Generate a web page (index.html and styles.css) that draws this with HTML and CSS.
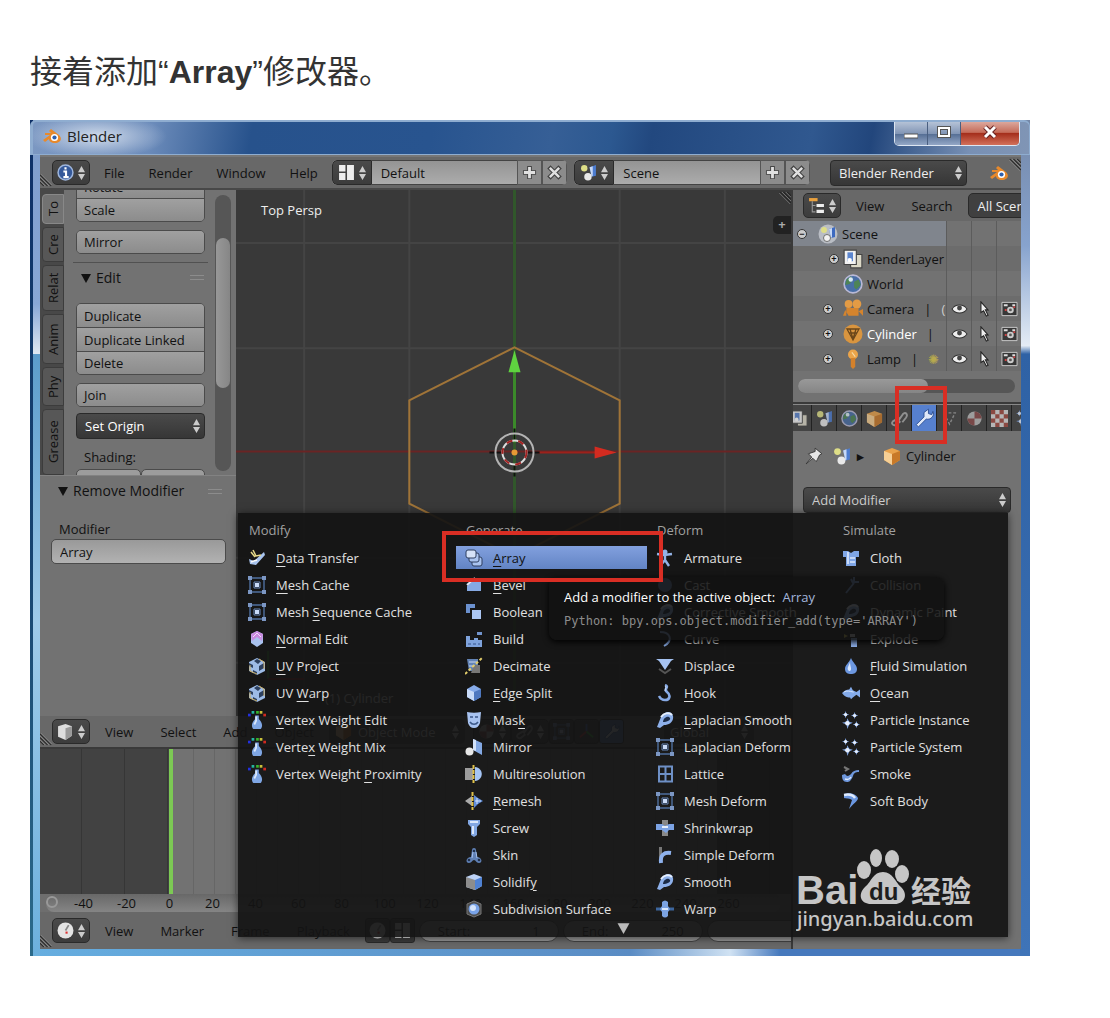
FILE: index.html
```html
<!DOCTYPE html>
<html lang="zh-CN">
<head>
<meta charset="utf-8">
<meta name="viewport" content="width=device-width, initial-scale=1">
<title>Array 修改器</title>
<link rel="stylesheet" href="styles.css">
</head>
<body>
<svg class="sprite" aria-hidden="true">
  <symbol id="updown" viewBox="0 0 8 16"><path d="M4 0l4 7H0zM4 16l4-7H0z" fill="currentColor"/></symbol>
  <symbol id="tri" viewBox="0 0 10 10"><path d="M0 1h10L5 10z" fill="currentColor"/></symbol>
  <symbol id="plus" viewBox="0 0 16 16"><path d="M8 1v14M1 8h14" stroke="#444" stroke-width="5"/><path d="M8 2v12M2 8h12" stroke="#e0e0e0" stroke-width="3"/></symbol>
  <symbol id="cross" viewBox="0 0 16 16"><path d="M2 2l12 12M14 2L2 14" stroke="#444" stroke-width="5"/><path d="M3 3l10 10M13 3L3 13" stroke="#e0e0e0" stroke-width="2.6"/></symbol>
  <symbol id="grip" viewBox="0 0 16 16"><path d="M0 1l15 15M0 6l10 10M0 11l5 5" stroke="#222" stroke-width="1.4"/><path d="M1 0l15 15M0 4l12 12M0 9l7 7" stroke="#999" stroke-width=".8"/></symbol>
  <symbol id="blender" viewBox="0 0 20 16"><path d="M1 12l7-5H3V5h6L7 3l2-2 8 6c4 4 1 8-4 8-4 0-6-2-6-4l-4 3z" fill="#e8892b"/><circle cx="12.500" cy="9.500" r="3.600" fill="#fff"/><circle cx="12.500" cy="9.500" r="2.100" fill="#2d5fae"/></symbol>
  <symbol id="info" viewBox="0 0 16 16"><circle cx="8" cy="8" r="7" fill="#35599a" stroke="#9fb6dc" stroke-width="1.400"/><path d="M8 3v2.200M6 7h2.500v5M6 12.300h5" stroke="#fff" stroke-width="2" fill="none"/></symbol>
  <symbol id="layout" viewBox="0 0 16 16"><path d="M1 1h6v6H1zM1 8.500h6V15H1zM8.500 1H15v14H8.500z" fill="#eee"/></symbol>
  <symbol id="scene" viewBox="0 0 16 16"><circle cx="4" cy="4" r="3" fill="#dede87"/><path d="M9 3l6-2v10l-4 1z" fill="#4c7cd0"/><path d="M9 3l3-1v9l-1 1z" fill="#c7d9f7"/><circle cx="7.500" cy="12" r="3.500" fill="#e9e9e9"/></symbol>
  <symbol id="scene-on" viewBox="0 0 20 20"><circle cx="10" cy="10" r="9.500" fill="#b9bdc4"/><circle cx="6" cy="6" r="3" fill="#dede87"/><path d="M11 5l6-2v10l-4 1z" fill="#3d6ac0"/><path d="M11 5l3-1v9l-1 1z" fill="#c7d9f7"/><circle cx="9" cy="14" r="3.500" fill="#f2f2f2" stroke="#555" stroke-width=".8"/></symbol>
  <symbol id="outliner" viewBox="0 0 16 16"><path d="M1 1h8v3H1z" fill="#e9a13e"/><path d="M4 4v10h3M4 8h3" stroke="#999" fill="none"/><path d="M8 6.500h7v3H8zM8 12h7v3H8z" fill="#eee"/></symbol>
  <symbol id="cube3d" viewBox="0 0 16 16"><path d="M1 3l7-2 6 2v9l-6 4-7-3z" fill="#ddd"/><path d="M8 5l6-2v9l-6 4z" fill="#999"/></symbol>
  <symbol id="clock" viewBox="0 0 16 16"><circle cx="8" cy="8" r="7.500" fill="#e4e4e4"/><path d="M8 8l3-5" stroke="#888" stroke-width="1.600"/><path d="M8 9h2v2H8z" fill="#d33"/></symbol>
  <symbol id="layers" viewBox="0 0 18 18"><path d="M6 5h11v12H7z" fill="#dcd9c8" stroke="#444"/><path d="M1 1h11v13H1z" fill="#f2f2f2" stroke="#444"/><path d="M4 3h5v8H4z" fill="#5c86cf"/><circle cx="6" cy="10" r="2" fill="#fff"/></symbol>
  <symbol id="world" viewBox="0 0 18 18"><circle cx="9" cy="9" r="8" fill="#486ea6" stroke="#b9b9d6" stroke-width="1.500"/><path d="M3 5l4-3 2 3-3 4-4 1zM10 7l4-2 2 5-4 4-2-2z" fill="#4e8456"/><circle cx="7" cy="5" r="2" fill="#d8e8f5"/></symbol>
  <symbol id="camera" viewBox="0 0 18 18"><circle cx="5" cy="4.500" r="3.500" fill="#e39b45"/><circle cx="12.500" cy="4.500" r="4" fill="#e39b45"/><path d="M3 8h11v7H3zM14 11l4-2v6zM2 10l-2 5h5z" fill="#d5842d"/></symbol>
  <symbol id="mesh" viewBox="0 0 20 20"><circle cx="10" cy="10" r="9.500" fill="#d9953f"/><path d="M4 5h12l-6 11zM7 5l3 10 3-10M6 9h8" stroke="#6a461a" stroke-width="1.300" fill="none"/></symbol>
  <symbol id="lamp" viewBox="0 0 16 18"><circle cx="8" cy="5" r="4.500" fill="#eba44a"/><path d="M6 8h4v8l-2 2-2-2z" fill="#d4812b"/><path d="M7 3l3 4" stroke="#f8dca8"/></symbol>
  <symbol id="eye" viewBox="0 0 16 12"><path d="M1 6c3-5 11-5 14 0-3 5-11 5-14 0z" fill="#eee" stroke="#333"/><circle cx="8" cy="5" r="2.300" fill="#444"/></symbol>
  <symbol id="pointer" viewBox="0 0 12 18"><path d="M2 1l8 9H7l3 6-2 1-3-6-3 2z" fill="#eee" stroke="#222" stroke-width="1.200"/></symbol>
  <symbol id="photo" viewBox="0 0 18 16"><path d="M1 1h16v14H1z" fill="#383838" stroke="#ccc"/><circle cx="10" cy="9" r="3.500" fill="#ccc"/><circle cx="10" cy="9" r="1.500" fill="#555"/><path d="M3 4h4M12 4h3" stroke="#ddd" stroke-width="2"/><path d="M4 8h2v2H4zM13 5h2v2h-2z" fill="#c44"/></symbol>
  <symbol id="objcube" viewBox="0 0 18 18"><path d="M1 4l8-3 8 3v9l-8 5-8-5z" fill="#e9a24b"/><path d="M1 4l8 3v11l-8-5z" fill="#f6cf95"/><path d="M9 7l8-3v9l-8 5z" fill="#c87928"/></symbol>
  <symbol id="link" viewBox="0 0 18 18"><path d="M8 11l5-7c3-2 5 1 3 4l-4 5M9 8l-7 4c-2 2 0 5 3 4l5-4" stroke="#aaa" stroke-width="2" fill="none"/></symbol>
  <symbol id="wrench" viewBox="0 0 18 18"><path d="M2 15L9 8V4l4-3v4l3 1 1-3c2 4-2 8-6 7l-7 7z" fill="#dfe8f8" stroke="#274a8e" stroke-width=".8"/></symbol>
  <symbol id="data" viewBox="0 0 18 18"><path d="M3 3h12L9 15z" stroke="#999" stroke-width="1.500" stroke-dasharray="3 2" fill="none"/></symbol>
  <symbol id="ball" viewBox="0 0 18 18"><circle cx="9" cy="9" r="7.500" fill="#bbb"/><path d="M9 9V1.500A7.500 7.500 0 0 1 16.500 9zM9 9v7.500A7.500 7.500 0 0 1 1.500 9z" fill="#8a4a4a"/></symbol>
  <symbol id="checker" viewBox="0 0 16 16"><path d="M0 0h16v16H0z" fill="#ddd"/><path d="M0 0h4v4H0zM8 0h4v4H8zM4 4h4v4H4zM12 4h4v4h-4zM0 8h4v4H0zM8 8h4v4H8zM4 12h4v4H4zM12 12h4v4h-4z" fill="#a34b42"/></symbol>
  <symbol id="pin" viewBox="0 0 16 16"><path d="M9 1l6 5-2 1-2 4-1 2-3-3-6 5 5-6-3-3 6-2z" fill="#e6e6e6" stroke="#333" stroke-width=".8"/></symbol>
  <symbol id="axes" viewBox="0 0 18 18"><path d="M9 9V1" stroke="#4a6fd0" stroke-width="2"/><path d="M9 9l-7 6" stroke="#c33" stroke-width="2"/><path d="M9 9l7 6" stroke="#3b3" stroke-width="2"/></symbol>

  <symbol id="i-transfer" viewBox="0 0 18 18"><path d="M1 10l5 2 10-9 1 3-9 10-6-1z" fill="#a9c4ee"/><path d="M5 1l3 6 5-1M3 3l4 5" stroke="#e6d98a" stroke-width="1.500" fill="none"/><path d="M3 13l6-2" stroke="#fff" stroke-width="1.500"/></symbol>
  <symbol id="i-cage" viewBox="0 0 18 18"><path d="M2 2h14v14H2z" fill="none" stroke="#4f6f9f" stroke-width="1.400"/><path d="M0 0h4v4H0zM14 0h4v4h-4zM0 14h4v4H0zM14 14h4v4h-4z" fill="#7c97c4"/><path d="M7 7h4v4H7z" fill="#c9dbf8"/><path d="M6 6h6v6H6z" fill="none" stroke="#6686b8"/></symbol>
  <symbol id="i-normal" viewBox="0 0 18 18"><path d="M3 4l6-3 6 3v9l-6 4-6-4z" fill="#a9c2ee"/><path d="M3 4l6-3 6 3-1 7-5-4-5 4z" fill="#c98be0"/><path d="M5 7l4-4 4 4" stroke="#f3d9fa" fill="none"/></symbol>
  <symbol id="i-uv" viewBox="0 0 18 18"><path d="M9 1l8 4v9l-8 4-8-4V5z" fill="#9dbbe6"/><path d="M1 6l4 2v3l-4-2zM9 2l4 2-3 3-4-3zM11 9l5-3v5l-5 3zM5 13l4 2v3l-4-2z" fill="#2c3f5e"/><path d="M9 17l-7-3V8M16 12V5l-5-3" stroke="#c9ad63" fill="none"/></symbol>
  <symbol id="i-weight" viewBox="0 0 20 20"><path d="M0 3h3v3H0z" fill="#2330e0"/><path d="M4 0h3v3H4z" fill="#26b6a0"/><path d="M9 0h3v3H9z" fill="#37b52c"/><path d="M13 0h3v3h-3z" fill="#c9c13a"/><path d="M17 3h3v3h-3z" fill="#d02a20"/><path d="M8 5h4v4c5 5 4 9 2 11H6c-2-2-3-6 2-11z" fill="#7fa6e4"/><path d="M9 6v5l-2 4" stroke="#d9e7fc" stroke-width="2" fill="none"/></symbol>
  <symbol id="i-array" viewBox="0 0 18 18"><g fill="#a9c3ef" stroke="#2e3f60"><rect x="7" y="8" width="10" height="9" rx="2"/><rect x="4" y="4" width="10" height="9" rx="2"/><rect x="1" y="1" width="10" height="8" rx="2" fill="#d5e2f8"/></g></symbol>
  <symbol id="i-bevel" viewBox="0 0 18 18"><path d="M2 10L10 3h6v12H2z" fill="#86a9e3"/><path d="M2 9l8-7" stroke="#dfe9fb" stroke-width="2"/></symbol>
  <symbol id="i-boolean" viewBox="0 0 18 18"><path d="M1 1h9v4H5v5H1z" fill="#6b91cf"/><path d="M7 7h9v9H7z" fill="#abc6f2"/></symbol>
  <symbol id="i-build" viewBox="0 0 18 18"><path d="M1 6h4v4h4V8h4v2h4v7H1z" fill="#7fa3dc"/><path d="M12 2h5v3h-5z" fill="#7193cc"/><path d="M3 14h12" stroke="#35538c" stroke-dasharray="3 2"/></symbol>
  <symbol id="i-decimate" viewBox="0 0 18 18"><path d="M2 2h11v12H4z" fill="#6484b5"/><path d="M9 8h6v8H6z" fill="#777"/><path d="M4 5h8M4 9h5" stroke="#c9d9f3"/><path d="M0 17L17 1" stroke="#e2cd6b" stroke-width="2" stroke-dasharray="3 2"/></symbol>
  <symbol id="i-edge" viewBox="0 0 18 18"><path d="M2 5l7-4 7 4v8l-7 4-7-4z" fill="#86abea"/><path d="M2 5l7 3v9l-7-4z" fill="#c8dbf8"/><path d="M9 8l7-3v8l-7 4z" fill="#4e78c0"/></symbol>
  <symbol id="i-mask" viewBox="0 0 18 18"><path d="M2 1c5 1 9 1 14 0l-1 11c-1 3-3 5-6 5s-5-2-6-5z" fill="#a8c3f0"/><path d="M5 6h3M10 6h3M5 11c2 3 6 3 8 0" stroke="#3a5788" stroke-width="1.600" fill="none"/></symbol>
  <symbol id="i-mirror" viewBox="0 0 18 18"><path d="M8 1l9 4v12l-9-5z" fill="#84a9e4"/><path d="M8 1l3 1v11l-3-1z" fill="#d3e2fa"/><circle cx="4.500" cy="13.500" r="4" fill="#e7e7e7"/></symbol>
  <symbol id="i-multires" viewBox="0 0 18 18"><path d="M0 3h8v12H0z" fill="#9c9c9c"/><path d="M10 2c9 1 9 13 0 14z" fill="#a5c5f5"/><path d="M8.500 0v18" stroke="#e0c24a" stroke-width="2" stroke-dasharray="4 1"/></symbol>
  <symbol id="i-remesh" viewBox="0 0 18 18"><path d="M0 9l7-5v10z" fill="#aaa"/><path d="M9 3l4 3 5 3-5 3-4 4z" fill="#5f8cd9"/><path d="M7.500 0v18" stroke="#e0c24a" stroke-width="2" stroke-dasharray="4 1"/><path d="M10 9h6M12 6v6" stroke="#d4e4fb"/></symbol>
  <symbol id="i-screw" viewBox="0 0 18 18"><path d="M3 1h12v4l-3 3v8l-3 2-3-2V8L3 5z" fill="#82a7e3"/><path d="M5 3h8M8 7v8" stroke="#dbe8fc" stroke-width="2"/></symbol>
  <symbol id="i-skin" viewBox="0 0 18 18"><path d="M7 4a2 2 0 0 1 4 0l1 7c5 0 6 6 2 6-3 0-3-3-5-3s-2 3-5 3c-4 0-3-6 2-6z" fill="#5f80b5"/><g fill="#20304c"><circle cx="9" cy="5" r="1.200"/><circle cx="4" cy="14" r="1.300"/><circle cx="14" cy="14" r="1.300"/></g><path d="M8 6l-1 6M11 6l1 6" stroke="#a8c3f0"/></symbol>
  <symbol id="i-solidify" viewBox="0 0 18 18"><path d="M1 4l8-3 8 3v9l-7 4-9-3z" fill="#bcd2f6"/><path d="M1 4l9 3v10l-9-3z" fill="#8d8d8d"/><path d="M10 7l7-3v9l-7 4z" fill="#4f82d4"/></symbol>
  <symbol id="i-subsurf" viewBox="0 0 18 18"><path d="M2 4l7-3 7 3v10l-7 3-7-3z" fill="#4c4c4c" stroke="#777"/><circle cx="9" cy="9" r="5.500" fill="#79a3e8"/><circle cx="8" cy="8" r="3" fill="#d5e4fb"/></symbol>
  <symbol id="i-armature" viewBox="0 0 18 18"><circle cx="9" cy="3" r="2.500" fill="#93b3e6"/><path d="M1 5l7 1 8-1M9 6v5l-5 6M9 11l4 6" stroke="#93b3e6" stroke-width="2.400" fill="none"/></symbol>
  <symbol id="i-cast" viewBox="0 0 18 18"><circle cx="9" cy="9" r="7" fill="#6686b8"/></symbol>
  <symbol id="i-smooth" viewBox="0 0 18 18"><path d="M1 16L5 6c3-6 11-7 12-1 1 6-4 9-9 9l-4 3z" fill="#8db0ea"/><path d="M7 11c0-4 5-7 7-4 1 2-3 4-7 4z" fill="#1b2b47"/><path d="M5 6c3-4 8-5 11-2" stroke="#e6effd" stroke-width="2" fill="none"/></symbol>
  <symbol id="i-curve" viewBox="0 0 18 18"><path d="M4 2c10 0 14 8 4 14" stroke="#88aae3" stroke-width="2" fill="none"/></symbol>
  <symbol id="i-displace" viewBox="0 0 18 18"><path d="M0 2h18l-3 2-6 9-6-9z" fill="#a5c2f1"/><path d="M3 12l6 4 6-4" stroke="#555" stroke-width="2" fill="none"/></symbol>
  <symbol id="i-hook" viewBox="0 0 18 18"><path d="M9 1c5 2-2 4 2 7 4 3 3 8-2 8-4 0-5-2-6-4" stroke="#88abe6" stroke-width="2.600" fill="none"/><path d="M9 2c2 1 0 3 0 5" stroke="#e0eafc" fill="none"/></symbol>
  <symbol id="i-lattice" viewBox="0 0 18 18"><path d="M3 1.500h13v15H3zM9.500 1v16M3 9h13" fill="none" stroke="#6e90c6" stroke-width="2"/></symbol>
  <symbol id="i-shrink" viewBox="0 0 18 18"><path d="M6 1h6v16H6z" fill="#888"/><path d="M0 5h6l3 2 4-2h5v6h-5l-3 3-4-3H0z" fill="#7ca3e4"/><path d="M6 8h6" stroke="#e6effd" stroke-width="2"/></symbol>
  <symbol id="i-simple" viewBox="0 0 18 18"><path d="M3 1h3v9l-1 6H3z" fill="#777"/><path d="M5 17c-1-8 3-11 10-10" stroke="#8eb1ec" stroke-width="4" fill="none"/></symbol>
  <symbol id="i-warp" viewBox="0 0 18 18"><path d="M0 9h18" stroke="#3d669e" stroke-width="3"/><path d="M6 2c2-2 4-2 6 0v4l2 3-2 3v4c-2 2-4 2-6 0v-4L4 9l2-3z" fill="#7ba3e2"/><path d="M6 9h6" stroke="#dce9fd" stroke-width="2"/></symbol>
  <symbol id="i-cloth" viewBox="0 0 18 18"><path d="M1 2h5l3 2 3-2h5v6h-3v9H4V8H1z" fill="#7fa6e6"/><path d="M6 3v12M8 9h5M8 13h5" stroke="#dce8fc" stroke-width="1.600"/></symbol>
  <symbol id="i-collision" viewBox="0 0 18 18"><path d="M4 17L12 7M12 1v5h5M9 3l2 4" stroke="#7fa6e6" stroke-width="2" fill="none"/></symbol>
  <symbol id="i-explode" viewBox="0 0 18 18"><path d="M9 8h6v9H9z" fill="#8fb1ec"/><path d="M8 4h5v3H8z" fill="#ddd"/><path d="M2 4l4 2-4 2z" fill="#dccb54"/></symbol>
  <symbol id="i-fluid" viewBox="0 0 18 18"><path d="M9 1c2 5 6 7 6 11s-3 5-6 5-6-1-6-5 4-6 6-11z" fill="#6c97e0"/><path d="M8 5c-1 4-3 5-2 8 1 2 3 1 3-1s-1-4-1-7z" fill="#dbe8fc"/></symbol>
  <symbol id="i-ocean" viewBox="0 0 20 18"><path d="M0 9c3-3 5-4 8-4l2-3 2 4 4 2 4-3v9l-4-3-4 3-2 2-1-2c-4 0-6-1-9-5z" fill="#84abea"/><path d="M2 8c4-2 6-1 11 0" stroke="#dde9fc" fill="none"/></symbol>
  <symbol id="i-particles" viewBox="0 0 20 20"><g fill="#7ea2df"><path d="M4 0l1 3 3 1-3 1-1 3-1-3-3-1 3-1zM14 1l1 3 3 1-3 1-1 3-1-3-3-1 3-1zM6 8l2 4 4 1-4 2-2 5-1-5-5-2 5-1zM16 11l1 3 3 1-3 1-1 3-1-3-3-1 3-1z"/></g><g fill="#e6effd"><circle cx="4" cy="4" r="1.800"/><circle cx="14" cy="5" r="1.800"/><circle cx="6" cy="13.500" r="2.500"/><circle cx="16" cy="15" r="1.800"/></g></symbol>
  <symbol id="i-smoke" viewBox="0 0 18 18"><path d="M0 10l3-1c2 3 4 2 6 0 2-3 4-4 8-4v2c-4 0-5 1-6 4-2 5-4 6-6 6-4 0-5-3-5-7z" fill="#6e97dc"/><path d="M2 2l4 2-3 2" stroke="#777" stroke-width="2" fill="none"/><path d="M3 14c3 1 5 0 6-2" stroke="#dce9fc" stroke-width="1.500" fill="none"/></symbol>
  <symbol id="i-soft" viewBox="0 0 18 18"><path d="M2 2c6-2 12 0 14 4 0 3-5 6-9 11l3-9c-2-2-6-1-8-2z" fill="#6b97e0"/><path d="M2 3c5-1 9 0 11 3" stroke="#dfeafd" stroke-width="2.500" fill="none"/></symbol>
</svg>

<article class="step">
  <p class="step-text">接着添加“<strong>Array</strong>”修改器。</p>

  <div class="window">
    <header class="titlebar">
      <svg class="logo"><use href="#blender"/></svg>
      <h1>Blender</h1>
      <div class="win-buttons">
        <button aria-label="Minimize"><svg viewBox="0 0 14 14"><path d="M0 9h14v4H0z" fill="#fff" stroke="#555"/></svg></button>
        <button aria-label="Maximize"><svg viewBox="0 0 14 14"><path d="M2 3h10v8H2z" fill="none" stroke="#555" stroke-width="4"/><path d="M2 3h10v8H2z" fill="none" stroke="#fff" stroke-width="2"/></svg></button>
        <button class="close" aria-label="Close"><svg viewBox="0 0 14 14"><path d="M2 2l10 10M12 2L2 12" stroke="#622" stroke-width="5"/><path d="M2 2l10 10M12 2L2 12" stroke="#fff" stroke-width="3"/></svg></button>
      </div>
    </header>

    <div class="screen">
      <header class="bar info-bar">
        <svg class="grip"><use href="#grip"/></svg>
        <button class="editor" aria-label="Editor type"><svg class="ico"><use href="#info"/></svg><svg class="ud"><use href="#updown"/></svg></button>
        <nav class="menus"><button>File</button><button>Render</button><button>Window</button><button>Help</button></nav>
        <div class="datablock">
          <button class="editor" aria-label="Choose screen"><svg class="ico"><use href="#layout"/></svg><svg class="ud"><use href="#updown"/></svg></button>
          <input type="text" value="Default" aria-label="Screen">
          <button aria-label="Add screen"><svg><use href="#plus"/></svg></button>
          <button aria-label="Delete screen"><svg><use href="#cross"/></svg></button>
        </div>
        <div class="datablock">
          <button class="editor" aria-label="Choose scene"><svg class="ico"><use href="#scene"/></svg><svg class="ud"><use href="#updown"/></svg></button>
          <input type="text" value="Scene" aria-label="Scene">
          <button aria-label="Add scene"><svg><use href="#plus"/></svg></button>
          <button aria-label="Delete scene"><svg><use href="#cross"/></svg></button>
        </div>
        <div class="dropdown engine"><select aria-label="Render engine"><option>Blender Render</option></select><svg class="ud"><use href="#updown"/></svg></div>
        <svg class="logo"><use href="#blender"/></svg>
        <svg class="grip end"><use href="#grip"/></svg>
      </header>

      <div class="editors">
        <div class="left">
          <section class="view3d">
            <aside class="shelf">
              <div class="tools">
                <nav class="tabs"><button class="on t1">To</button><button class="t2">Cre</button><button class="t3">Relat</button><button class="t4">Anim</button><button class="t5">Phy</button><button class="t6">Grease</button></nav>
                <div class="tool-list">
                  <div class="stack"><button>Rotate</button><button>Scale</button></div>
                  <div class="stack"><button>Mirror</button></div>
                  <h2 class="panel-head edit"><svg><use href="#tri"/></svg>Edit<i class="handle"></i></h2>
                  <div class="stack"><button>Duplicate</button><button>Duplicate Linked</button><button>Delete</button></div>
                  <div class="stack"><button>Join</button></div>
                  <div class="dropdown origin"><select aria-label="Set Origin"><option>Set Origin</option></select><svg class="ud"><use href="#updown"/></svg></div>
                  <p class="shading">Shading:</p>
                  <div class="pair"><button aria-label="Smooth"></button><button aria-label="Flat"></button></div>
                </div>
                <div class="scroll-v"><i></i></div>
              </div>
              <div class="operator">
                <h2 class="panel-head"><svg><use href="#tri"/></svg>Remove Modifier<i class="handle"></i></h2>
                <label for="mod">Modifier</label>
                <input id="mod" type="text" value="Array">
              </div>
            </aside>
            <div class="viewport">
              <svg class="canvas" viewBox="0 0 554 526" preserveAspectRatio="xMinYMin slice">
                <path d="M68 0v526M173 0v526M383 0v526M488 0v526M0 53h554M0 158h554M0 367h554M0 472h554" stroke="#444" stroke-width="2"/>
                <path d="M278 0v526" stroke="#31572b" stroke-width="3"/>
                <path d="M0 261h554" stroke="#6a2424" stroke-width="2"/>
                <path d="M278 157l105 53v103l-105 53-105-53V210z" fill="none" stroke="#a07438" stroke-width="2"/>
                <path d="M278 180v72" stroke="#3b8a2a" stroke-width="3"/><path d="M278 160l6 22h-12z" fill="#5fd440"/>
                <path d="M301 262h58" stroke="#9c211b" stroke-width="2"/><path d="M380 262l-22-6v12z" fill="#d42b20"/>
                <path d="M253 262h12M291 262h12M278 238v12M278 274v12" stroke="#111" stroke-width="2"/>
                <circle cx="278" cy="262" r="19" fill="none" stroke="#b4b4b4" stroke-width="2"/>
                <circle cx="278" cy="262" r="12" fill="none" stroke="#ddd" stroke-width="2"/>
                <circle cx="278" cy="262" r="12" fill="none" stroke="#a32222" stroke-width="2" stroke-dasharray="6 6"/>
                <circle cx="278" cy="262" r="3" fill="#e79a35"/>
                <path d="M32 488v-28" stroke="#3b9a2a" stroke-width="2"/><path d="M32 488h36" stroke="#9c211b" stroke-width="2"/>
              </svg>
              <div class="hud"><span>Top Persp</span><span>(1) Cylinder</span></div>
              <div class="hud-end"><svg class="grip end"><use href="#grip"/></svg><b>+</b></div>
            </div>
          </section>

          <div class="bar view-bar">
            <svg class="grip"><use href="#grip"/></svg>
            <button class="editor" aria-label="Editor type"><svg class="ico"><use href="#cube3d"/></svg><svg class="ud"><use href="#updown"/></svg></button>
            <nav class="menus"><button>View</button><button>Select</button><button>Add</button><button>Object</button></nav>
            <button class="wide"><svg class="ico"><use href="#objcube"/></svg><span>Object Mode</span><svg class="ud"><use href="#updown"/></svg></button>
            <button class="editor" aria-label="Shading"><svg class="ico"><use href="#ball"/></svg><svg class="ud"><use href="#updown"/></svg></button>
            <button class="editor" aria-label="Pivot"><svg class="ico"><use href="#link"/></svg><svg class="ud"><use href="#updown"/></svg></button>
            <button class="editor slim" aria-label="Center points"><svg class="ico"><use href="#i-cage"/></svg></button>
            <button class="editor slim" aria-label="Manipulator"><svg class="ico"><use href="#axes"/></svg></button>
            <button class="editor slim blue" aria-label="Translate"><svg class="ico"><use href="#wrench"/></svg></button>
            <button class="wide global"><span>Global</span><svg class="ud"><use href="#updown"/></svg></button>
          </div>

          <section class="timeline">
            <div class="track"><i class="before"></i><i class="range"></i></div>
            <div class="ruler"><b></b><span>-40</span><span>-20</span><span>0</span><span>20</span><span>40</span><span>60</span><span>80</span><span>100</span><span>120</span><span>140</span><span>160</span><span>180</span><span>200</span><span>220</span><span>240</span><span>260</span></div>
            <div class="bar time-bar">
              <svg class="grip"><use href="#grip"/></svg>
              <button class="editor" aria-label="Editor type"><svg class="ico"><use href="#clock"/></svg><svg class="ud"><use href="#updown"/></svg></button>
              <nav class="menus"><button>View</button><button>Marker</button><button>Frame</button><button>Playback</button></nav>
              <button class="editor slim" aria-label="Range"><svg class="ico"><use href="#clock"/></svg></button>
              <button class="editor slim" aria-label="Lock"><svg class="ico"><use href="#layout"/></svg></button>
              <button class="frame"><span>Start:</span><span>1</span></button>
              <button class="frame"><span>End:</span><span>250</span></button>
              <button class="frame" aria-label="Current frame"></button>
            </div>
          </section>
        </div>

        <div class="right">
          <section class="outliner">
            <div class="bar out-bar">
              <button class="editor" aria-label="Editor type"><svg class="ico"><use href="#outliner"/></svg><svg class="ud"><use href="#updown"/></svg></button>
              <nav class="menus"><button>View</button><button>Search</button></nav>
              <button class="all">All Scenes</button>
            </div>
            <ul class="tree">
              <li class="root"><div><em>−</em><svg><use href="#scene-on"/></svg><span>Scene</span></div><i></i><i></i><i></i></li>
              <li class="child"><div><em>+</em><svg><use href="#layers"/></svg><span>RenderLayer</span></div><i></i><i></i><i></i></li>
              <li class="child leaf"><div><svg><use href="#world"/></svg><span>World</span></div><i></i><i></i><i></i></li>
              <li class="obj"><div><em>+</em><svg><use href="#camera"/></svg><span>Camera</span><s>|</s><s class="more">(</s></div><i><svg><use href="#eye"/></svg></i><i><svg><use href="#pointer"/></svg></i><i><svg><use href="#photo"/></svg></i></li>
              <li class="obj sel"><div><em>+</em><svg><use href="#mesh"/></svg><span>Cylinder</span><s>|</s></div><i><svg><use href="#eye"/></svg></i><i><svg><use href="#pointer"/></svg></i><i><svg><use href="#photo"/></svg></i></li>
              <li class="obj"><div><em>+</em><svg><use href="#lamp"/></svg><span>Lamp</span><s>|</s><s class="sun">✺</s></div><i><svg><use href="#eye"/></svg></i><i><svg><use href="#pointer"/></svg></i><i><svg><use href="#photo"/></svg></i></li>
            </ul>
            <div class="scroll-h"><i></i></div>
          </section>
          <section class="props">
            <nav class="prop-tabs">
              <button aria-label="Layers"><svg><use href="#layers"/></svg></button><button aria-label="Scene"><svg><use href="#scene"/></svg></button><button aria-label="World"><svg><use href="#world"/></svg></button><button aria-label="Object"><svg><use href="#objcube"/></svg></button><button aria-label="Constraints"><svg><use href="#link"/></svg></button><button class="on" aria-label="Modifiers"><svg><use href="#wrench"/></svg></button><button aria-label="Data"><svg><use href="#data"/></svg></button><button aria-label="Material"><svg><use href="#ball"/></svg></button><button aria-label="Texture"><svg><use href="#checker"/></svg></button><button aria-label="Particles"><svg><use href="#i-particles"/></svg></button>
            </nav>
            <div class="crumbs"><svg><use href="#pin"/></svg><svg><use href="#scene"/></svg><b>▸</b><svg><use href="#objcube"/></svg><span>Cylinder</span></div>
            <div class="dropdown add"><select aria-label="Add Modifier"><option>Add Modifier</option></select><svg class="ud"><use href="#updown"/></svg></div>
          </section>
        </div>
      </div>
    </div>

    <div class="popup">
      <div class="col">
        <h3>Modify</h3>
        <button><svg><use href="#i-transfer"/></svg><span><u>D</u>ata Transfer</span></button>
        <button><svg><use href="#i-cage"/></svg><span><u>M</u>esh Cache</span></button>
        <button><svg><use href="#i-cage"/></svg><span>Mesh <u>S</u>equence Cache</span></button>
        <button><svg><use href="#i-normal"/></svg><span><u>N</u>ormal Edit</span></button>
        <button><svg><use href="#i-uv"/></svg><span><u>U</u>V Project</span></button>
        <button><svg><use href="#i-uv"/></svg><span>UV <u>W</u>arp</span></button>
        <button><svg><use href="#i-weight"/></svg><span><u>V</u>ertex Weight Edit</span></button>
        <button><svg><use href="#i-weight"/></svg><span>Verte<u>x</u> Weight Mix</span></button>
        <button><svg><use href="#i-weight"/></svg><span>Vertex Weight <u>P</u>roximity</span></button>
      </div>
      <div class="col">
        <h3>Generate</h3>
        <button class="on"><svg><use href="#i-array"/></svg><span><u>A</u>rray</span></button>
        <button><svg><use href="#i-bevel"/></svg><span><u>B</u>evel</span></button>
        <button><svg><use href="#i-boolean"/></svg><span>Boolean</span></button>
        <button><svg><use href="#i-build"/></svg><span>Build</span></button>
        <button><svg><use href="#i-decimate"/></svg><span>Decimate</span></button>
        <button><svg><use href="#i-edge"/></svg><span><u>E</u>dge Split</span></button>
        <button><svg><use href="#i-mask"/></svg><span>Mas<u>k</u></span></button>
        <button><svg><use href="#i-mirror"/></svg><span>Mirror</span></button>
        <button><svg><use href="#i-multires"/></svg><span>Multiresolution</span></button>
        <button><svg><use href="#i-remesh"/></svg><span><u>R</u>emesh</span></button>
        <button><svg><use href="#i-screw"/></svg><span>Screw</span></button>
        <button><svg><use href="#i-skin"/></svg><span>Skin</span></button>
        <button><svg><use href="#i-solidify"/></svg><span>Solidif<u>y</u></span></button>
        <button><svg><use href="#i-subsurf"/></svg><span>Subdivision Surface</span></button>
      </div>
      <div class="col">
        <h3>Deform</h3>
        <button><svg><use href="#i-armature"/></svg><span>Armature</span></button>
        <button><svg><use href="#i-cast"/></svg><span>Cast</span></button>
        <button><svg><use href="#i-smooth"/></svg><span>Corrective Smooth</span></button>
        <button><svg><use href="#i-curve"/></svg><span>Curve</span></button>
        <button><svg><use href="#i-displace"/></svg><span>Displace</span></button>
        <button><svg><use href="#i-hook"/></svg><span><u>H</u>ook</span></button>
        <button><svg><use href="#i-smooth"/></svg><span><u>L</u>aplacian Smooth</span></button>
        <button><svg><use href="#i-cage"/></svg><span>Laplacian Deform</span></button>
        <button><svg><use href="#i-lattice"/></svg><span>Lattice</span></button>
        <button><svg><use href="#i-cage"/></svg><span>Mesh Deform</span></button>
        <button><svg><use href="#i-shrink"/></svg><span>Shrinkwrap</span></button>
        <button><svg><use href="#i-simple"/></svg><span>Simple Deform</span></button>
        <button><svg><use href="#i-smooth"/></svg><span>Smooth</span></button>
        <button><svg><use href="#i-warp"/></svg><span>Warp</span></button>
      </div>
      <div class="col">
        <h3>Simulate</h3>
        <button><svg><use href="#i-cloth"/></svg><span>Cloth</span></button>
        <button><svg><use href="#i-collision"/></svg><span>Collision</span></button>
        <button><svg><use href="#i-smooth"/></svg><span>Dynamic Paint</span></button>
        <button><svg><use href="#i-explode"/></svg><span>Explode</span></button>
        <button><svg><use href="#i-fluid"/></svg><span><u>F</u>luid Simulation</span></button>
        <button><svg><use href="#i-ocean"/></svg><span><u>O</u>cean</span></button>
        <button><svg><use href="#i-particles"/></svg><span>Particle <u>I</u>nstance</span></button>
        <button><svg><use href="#i-particles"/></svg><span>Particle System</span></button>
        <button><svg><use href="#i-smoke"/></svg><span>Smoke</span></button>
        <button><svg><use href="#i-soft"/></svg><span>Soft Body</span></button>
      </div>
      <svg class="more-arrow"><use href="#tri"/></svg>
    </div>

    <div class="tooltip" role="tooltip">
      <p>Add a modifier to the active object: <span>Array</span></p>
      <code>Python: bpy.ops.object.modifier_add(type='ARRAY')</code>
    </div>

    <i class="mark mark-array"></i>
    <i class="mark mark-tab"></i>

    <svg class="watermark" viewBox="0 0 184 88" role="img" aria-label="Baidu jingyan">
      <text x="0" y="57" class="wm-bai">Bai</text>
      <g class="wm-paw"><ellipse cx="68" cy="23" rx="7" ry="9"/><ellipse cx="80" cy="11" rx="6" ry="9"/><ellipse cx="96" cy="12" rx="7" ry="9"/><ellipse cx="106" cy="27" rx="7" ry="9"/><path d="M87 25c10 0 12 10 18 15 8 8 3 17-6 17H75c-10 0-14-9-6-17 7-6 8-15 18-15z"/></g>
      <text x="73" y="53" class="wm-du">du</text>
      <text x="115" y="55" class="wm-cn">经验</text>
      <text x="1" y="79" class="wm-url">jingyan.baidu.com</text>
    </svg>
  </div>
</article>
</body>
</html>
```
FILE: styles.css
```css
* { box-sizing: border-box; }
body { margin: 0; background: #fff; }
.sprite { display: none; }
.step { padding: 48px 80px 62px 30px; }
.step-text {
  margin: 0 0 24px;
  font: 32px/48px "Liberation Sans", "Noto Sans CJK SC", sans-serif;
  color: #333;
}

/* window frame */
.window {
  position: relative;
  font: 13px/16px "Open Sans", "Noto Sans", sans-serif;
  color: #111;
  padding: 0 9px 7px 10px;
  background:
    linear-gradient(#0d2f66, #16436f 50%, #2b6a8a) left / 3px 100% no-repeat,
    linear-gradient(#7d9cca, #88a7d6 22%, #dfe9f3 28%, #5b9ccb 28%, #9fcbe9 60%, #6cb0dd) left / 10px 100% no-repeat,
    linear-gradient(#7488a8, #87a3ce 15%, #e4ecf5 27%, #2f62a5 28%, #3f74b8) right / 10px 100% no-repeat,
    linear-gradient(90deg, #66aee0, #5a8cc4 60%, #d0e2f3 70%, #4679bd 75%);
}
.window button, .window input, .window select { font: inherit; color: inherit; margin: 0; border: 0; padding: 0; background: none; }
.window h1, .window h2, .window h3, .window p { margin: 0; font-weight: 400; }
.titlebar {
  display: flex;
  align-items: center;
  gap: 5px;
  height: 35px;
  margin: 0 -9px 0 -10px;
  padding: 0 9px 4px 9px;
  border: solid #8fadd0;
  border-width: 2px 1px 1px 3px;
  border-radius: 6px 6px 0 0;
  background:
    radial-gradient(ellipse 70px 22px at 64px 45%, #d0dbeb, rgba(160, 182, 214, 0) 100%),
    linear-gradient(100deg, #7c98c2, #6b8bba 12%, #27528c 22%, #28548f 40%, #365f96 52%, #2c5890 58%, #22487f 62%, #30588f 78%, #22467c 84%, #7890b4 94%, #8095b5);
}
.titlebar h1 { flex: 1; font-size: 15px; line-height: 20px; color: #222; }
.logo { width: 20px; height: 16px; flex: none; }
.win-buttons { display: flex; align-self: flex-start; height: 24px; border: 1px solid #dde6f2; border-top: 0; border-radius: 0 0 5px 5px; overflow: hidden; }
.window .win-buttons button { width: 33px; border-right: 1px solid #4a5f80; background: linear-gradient(#b5c2d6, #8296b6 50%, #526b92 50%, #93a7c6); }
.window .win-buttons .close { width: 58px; border: 0; background: linear-gradient(#dba79c, #c56c5a 45%, #a52f1c 50%, #d2705a); }
.win-buttons svg { width: 14px; height: 14px; }

/* header bars */
.screen { background: #3a3a3a; }
.bar { display: flex; align-items: center; height: 31px; background: #686868; overflow: hidden; }
.info-bar { height: 35px; border-bottom: 2px solid #484848; border-top: 2px solid #777; }
.grip { width: 12px; height: 16px; flex: none; align-self: flex-end; }
.grip.end { transform: rotate(180deg); align-self: flex-start; margin-left: auto; }
.window .editor {
  display: flex; align-items: center; justify-content: center; gap: 4px; flex: none;
  width: 38px; height: 25px; border: 1px solid #2a2a2a; border-radius: 5px;
  background: linear-gradient(#4a4a4a, #3c3c3c);
}
.ico { width: 17px; height: 17px; }
.ud { width: 7px; height: 16px; color: #ccc; flex: none; }
.menus { display: flex; gap: 27px; padding: 0 15px; flex: none; }
.info-bar .menus { gap: 24px; padding: 0 14px; }
.datablock { display: flex; flex: 0 1 236px; min-width: 0; height: 25px; margin-right: 7px; border-radius: 5px; overflow: hidden; background: #909090; }
.window .datablock .editor { width: 40px; border-radius: 5px 0 0 5px; }
.window .datablock input { flex: 1; min-width: 0; padding: 0 9px; background: linear-gradient(#949494, #acacac); border: solid #444; border-width: 1px 0; }
.window .datablock > button:not(.editor) { width: 25px; display: grid; place-items: center; border: 1px solid #555; background: #8c8c8c; }
.datablock button:not(.editor) svg { width: 15px; height: 15px; }
.dropdown { display: grid; grid-template: 24px / 1fr; align-items: center; border: 1px solid #2a2a2a; border-radius: 4px; background: linear-gradient(#4a4a4a, #363636); color: #eee; }
.dropdown select, .dropdown .ud { grid-area: 1 / 1; }
.window .dropdown select { appearance: none; width: 100%; height: 24px; padding: 0 8px; }
.dropdown .ud { justify-self: end; margin-right: 4px; pointer-events: none; }
.info-bar .datablock { flex-basis: 238px; }
.engine { width: 137px; flex: none; margin: 0 22px 0 13px; }

/* editor areas */
.editors { display: flex; align-items: stretch; gap: 2px; }
.left { flex: 1; min-width: 0; display: flex; flex-direction: column; }
.right { flex: none; width: 228px; display: flex; flex-direction: column; gap: 2px; overflow: hidden; }
.view3d { display: flex; height: 526px; }
.shelf { flex: none; width: 196px; background: #727272; }
.tools { display: flex; height: 286px; overflow: hidden; border-bottom: 1px solid #828282; }
.tabs { flex: none; width: 24px; padding: 4px 0 0 2px; background: #484848; display: flex; flex-direction: column; gap: 3px; }
.window .tabs button { writing-mode: vertical-rl; transform: rotate(180deg); border-radius: 0 4px 4px 0; border: 1px solid #3c3c3c; background: #575757; text-align: center; line-height: 20px; }
.window .tabs .on { background: #727272; border-color: #888; }
.t1 { height: 30px; } .t2 { height: 35px; } .t3 { height: 46px; } .t4 { height: 50px; } .t5 { height: 39px; } .t6 { height: 66px; }
.tool-list { width: 152px; padding: 0 11px 0 12px; margin-top: -16px; flex: none; }
.stack { display: flex; flex-direction: column; border: 1px solid #4b4b4b; border-radius: 5px; overflow: hidden; margin-bottom: 8px; }
.window .stack button { height: 24px; padding: 0 7px; text-align: left; background: linear-gradient(#a0a0a0, #8c8c8c); }
.window .stack button:not(:last-child) { border-bottom: 1px solid #4b4b4b; }
.stack button:last-child { height: 22px; }
.panel-head { display: flex; align-items: center; gap: 5px; height: 30px; font-size: 14px; line-height: 20px; }
.panel-head svg { width: 10px; height: 10px; }
.handle { width: 14px; height: 5px; margin-left: auto; border: solid #8c8c8c; border-width: 1px 0; }
.panel-head.edit { border-top: 1px solid #515151; margin: 0 -3px 11px; padding: 0 4px 0 8px; }
.origin { margin-top: -2px; }
.origin select { color: #fff; }
.window .add select { color: #ccc; }
.shading { padding: 10px 8px 4px; }
.pair { display: grid; grid-template-columns: 1fr 1fr; }
.window .pair button { height: 24px; background: #9c9c9c; border: 1px solid #4b4b4b; border-radius: 5px; }
.scroll-v { width: 16px; height: 276px; margin: 5px 0 0 -1px; padding: 43px 1px 0; border-radius: 8px; background: #565656; }
.scroll-v i { display: block; height: 150px; border-radius: 7px; background: linear-gradient(90deg, #989898, #868686); }
.operator { padding: 0 10px 0 11px; }
.operator .panel-head { padding: 0 4px 0 7px; margin-bottom: 13px; }
.operator label { display: block; padding: 0 8px; line-height: 20px; }
.window .operator input { width: 100%; height: 25px; padding: 0 8px; border: 1px solid #4b4b4b; border-radius: 5px; background: linear-gradient(#999, #b2b2b2); }
.viewport { flex: 1; min-width: 0; display: grid; grid-template: 526px / 1fr; background: #393939; overflow: hidden; }
.viewport > * { grid-area: 1 / 1; }
.canvas { width: 100%; height: 526px; }
.hud { display: flex; flex-direction: column; justify-content: space-between; padding: 12px 25px 10px; color: #eee; }
.hud span:last-child { padding-left: 64px; }
.hud-end { justify-self: end; display: flex; flex-direction: column; align-items: flex-end; gap: 10px; color: #aaa; }
.hud-end b { width: 18px; height: 18px; border-radius: 5px 0 0 5px; background: #222; text-align: center; }
.view-bar .grip, .time-bar .grip { width: 12px; }
.window .wide { display: flex; align-items: center; gap: 6px; width: 136px; height: 25px; padding: 0 6px; border-radius: 5px; background: #3f3f3f; color: #ddd; margin-right: 8px; flex: none; }
.wide span { flex: 1; text-align: left; }
.window .slim { width: 25px; border-radius: 3px; }
.window .blue { background: #5680c2; }
.window .global { margin-left: 40px; width: 90px; }

.timeline { flex: 1; display: flex; flex-direction: column; margin-top: 2px; background: #6e6e6e; }
.track { height: 145px; display: flex; background: repeating-linear-gradient(90deg, transparent 0 41px, #363636 41px 42px, transparent 42px 43px) 0 0, #424242; }
.track .before { width: 129px; }
.track .range { width: 548px; border-left: 4px solid #7cc954; background: repeating-linear-gradient(90deg, transparent 0 20px, #666 20px 21px), #727272; }
.ruler { display: flex; height: 18px; margin: 0 10px 0 6px; overflow: hidden; border-radius: 8px; background: linear-gradient(#686868, #858585); }
.ruler b { flex: none; width: 12px; height: 12px; margin: 2px 4px 2px 0; border: 2px solid #999; border-radius: 6px; }
.ruler span { flex: none; width: 43px; text-align: center; line-height: 18px; }
.time-bar { flex: 1; min-height: 37px; }
.window .frame { display: flex; justify-content: space-between; width: 140px; flex: none; height: 22px; align-items: center; padding: 0 18px; margin-left: 4px; border-radius: 11px; background: #999; border: 1px solid #444; }

/* outliner */
.outliner { height: 212px; background: #727272; }
.out-bar { padding-left: 10px; }
.window .all { height: 25px; padding: 0 9px; margin: 0 -40px 0 0; flex: none; border: 1px solid #2a2a2a; border-radius: 5px; background: #404040; color: #eee; }
.tree { list-style: none; margin: 0; padding: 0; }
.tree li { display: flex; height: 25px; }
.tree li:nth-child(even) { background: #6c6c6c; }
.tree div { flex: 1; min-width: 0; display: flex; align-items: center; gap: 4px; overflow: hidden; white-space: nowrap; padding-left: 4px; }
.tree .root div { background: #80858d; }
.tree div svg { width: 20px; height: 20px; flex: none; }
.tree i { flex: none; width: 25px; border-left: 1px solid #5c5c5c; display: grid; place-items: center; }
.tree i svg { width: 17px; height: 16px; }
.tree em { width: 10px; height: 10px; flex: none; border: 1px solid #333; border-radius: 5px; background: #ccc; font: 700 9px/8px "Liberation Sans", sans-serif; text-align: center; }
.tree .root em { margin-right: 7px; }
.tree .child div { padding-left: 36px; }
.tree .leaf div { padding-left: 50px; }
.tree .obj div { padding-left: 30px; }
.tree .obj em { margin-right: 6px; }
.tree .sel span { color: #fff; }
.tree s { text-decoration: none; padding-left: 6px; }
.tree .more { color: #ccc; }
.tree .sun { color: #b7a94e; }
.scroll-h { height: 14px; margin: 8px 6px 0 5px; border-radius: 7px; background: #565656; }
.scroll-h i { display: block; width: 130px; height: 14px; border-radius: 7px; background: linear-gradient(#999, #858585); }

/* properties */
.props { flex: 1; background: #727272; border-top: 1px solid #888; }
.prop-tabs { display: flex; margin-left: -6px; height: 26px; background: #333; overflow: hidden; }
.window .prop-tabs button { flex: none; width: 25px; display: grid; place-items: center; border-right: 1px solid #222; background: #444; }
.window .prop-tabs .on { background: #5680cf; }
.prop-tabs svg { width: 17px; height: 17px; opacity: .75; }
.prop-tabs .on svg { width: 20px; height: 20px; opacity: 1; }
.crumbs { display: flex; align-items: center; gap: 10px; padding: 16px 12px 22px; }
.crumbs svg { width: 18px; height: 18px; }
.crumbs b { width: 8px; margin: 0 8px 0 -4px; }
.crumbs span { margin-left: -5px; }
.add { margin: 0 10px; }

/* modifier menu */
.popup {
  position: absolute; left: 208px; top: 393px; width: 770px; height: 424px;
  display: grid; grid-template-columns: 217px 191px 186px 1fr; align-items: start;
  padding: 4px 0 0 1px; background: rgba(19, 19, 19, .92); color: #e0e0e0;
  box-shadow: 0 1px 8px rgba(0, 0, 0, .6);
}
.col { display: flex; flex-direction: column; }
.col h3 { height: 27px; padding-left: 10px; font-size: 13px; line-height: 27px; color: #a0a0a0; }
.window .col button { display: flex; align-items: center; gap: 10px; height: 27px; padding-left: 9px; white-space: nowrap; text-align: left; }
.col svg { width: 18px; height: 18px; flex: none; }
.col u { text-underline-offset: 3px; }
.window .col .on { height: 23px; margin: 2px 0; background: linear-gradient(#82a0de, #6284c4); color: #111; }
.more-arrow { position: absolute; left: 379px; top: 409px; width: 13px; height: 12px; color: #bbb; }

.tooltip { position: absolute; left: 519px; top: 457px; width: 395px; padding: 11px 14px 10px 15px; border-radius: 8px; background: rgba(18, 18, 18, .88); box-shadow: 0 2px 6px #000; }
.window .tooltip p { color: #fff; line-height: 18px; margin-bottom: 6px; }
.tooltip span { color: #a3b6dc; margin-left: 4px; }
.tooltip code { display: block; font: 12px/18px "DejaVu Sans Mono", monospace; color: #8c8c8c; white-space: nowrap; }

.mark { position: absolute; border: 4px solid #d92e24; }
.mark-array { left: 412px; top: 411px; width: 221px; height: 51px; }
.mark-tab { left: 865px; top: 266px; width: 52px; height: 58px; }

.watermark { position: absolute; left: 766px; top: 727px; width: 184px; height: 88px; fill: #c6c6c6; }
.wm-bai { font: 700 40px "Liberation Sans", sans-serif; }
.wm-du { font: 700 24px "Liberation Sans", sans-serif; fill: #1e1e1e; }
.wm-cn { font: 700 30px "Noto Sans CJK SC", sans-serif; }
.wm-url { font: 500 20px "Noto Sans", sans-serif; }
```
